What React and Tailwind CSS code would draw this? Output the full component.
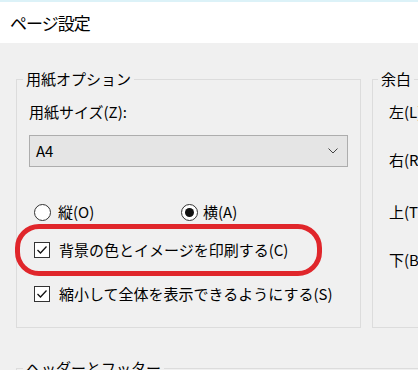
import React from "react";

function Radio({ checked }) {
  return (
    <span className="w-[17px] h-[17px] rounded-full border border-[#333] bg-white flex items-center justify-center shrink-0">
      {checked && <span className="w-[9px] h-[9px] rounded-full bg-[#111]" />}
    </span>
  );
}

function Check() {
  return (
    <span className="w-[16px] h-[16px] border border-[#333] bg-white flex items-center justify-center shrink-0">
      <svg width="14" height="14" viewBox="0 0 14 14">
        <path d="M2.5 7 L5.5 10 L11.5 3.5" fill="none" stroke="#111" strokeWidth="1.3" />
      </svg>
    </span>
  );
}

export default function App() {
  return (
    <div className="w-[418px] h-[370px] overflow-hidden bg-[#f0f0f0] relative text-black font-['Noto_Sans_CJK_JP',sans-serif] text-[15px] leading-5">
      <div className="h-[43px] bg-white border-t-2 border-[#dcf2f8] flex items-center pl-[10px] text-[17px] tracking-[-1px]">
        ページ設定
      </div>
      <div className="flex gap-[11px] pl-4 pt-[26px]">
        <fieldset className="w-[345px] h-[259px] shrink-0 border border-[#dcdcdc] px-3">
          <legend className="ml-[-6px] px-[3px] leading-5">用紙オプション</legend>
          <div className="mt-[13px] leading-5">用紙サイズ(Z):</div>
          <div className="mt-[13px] h-[32px] bg-[#e5e5e5] border border-[#adadad] flex items-center justify-between pl-[6px] pr-[9px]">
            <span>A4</span>
            <svg width="10" height="6" viewBox="0 0 10 6">
              <polyline points="0.5,0.5 5,5 9.5,0.5" fill="none" stroke="#444" strokeWidth="1" />
            </svg>
          </div>
          <div className="mt-[35px] flex items-center ml-[5px] h-5">
            <div className="w-[147px] flex items-center gap-[7px]">
              <Radio />
              <span>縦(O)</span>
            </div>
            <div className="flex items-center gap-[5px]">
              <Radio checked />
              <span>横(A)</span>
            </div>
          </div>
          <div className="mt-[18px] flex items-center gap-[9px] ml-[5px] h-5">
            <Check />
            <span>背景の色とイメージを印刷する(C)</span>
          </div>
          <div className="mt-[24px] flex items-center gap-[9px] ml-[5px] h-5">
            <Check />
            <span>縮小して全体を表示できるようにする(S)</span>
          </div>
        </fieldset>
        <fieldset className="w-[120px] h-[259px] shrink-0 border border-[#dcdcdc] pl-4">
          <legend className="ml-[-11px] px-[3px] leading-5">余白</legend>
          <div className="mt-[13px]">左(L)</div>
          <div className="mt-[28px]">右(R)</div>
          <div className="mt-[32px]">上(T)</div>
          <div className="mt-[28px]">下(B)</div>
        </fieldset>
      </div>
      <div className="pl-4 mt-[30px]">
        <fieldset className="w-[600px] h-[80px] border border-[#dcdcdc]">
          <legend className="ml-[6px] px-[3px] leading-5">ヘッダーとフッター</legend>
        </fieldset>
      </div>
      <div className="absolute left-[15px] top-[224px] w-[307px] h-[52px] border-[5px] border-[#e0262b] rounded-[24px]" />
    </div>
  );
}
